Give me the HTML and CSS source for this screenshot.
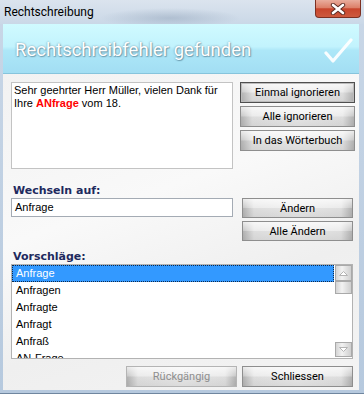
FILE: index.html
```html
<!DOCTYPE html>
<html lang="de">
<head>
    <meta charset="UTF-8">
    <title>Rechtschreibung</title>
    <link rel="stylesheet" href="styles.css">
</head>
<body>
    <div class="window">
        <div class="titlebar">
            <span class="title">Rechtschreibung</span>
            <div class="close">
                <svg width="18" height="12" viewBox="0 0 18 12">
                    <path d="M4 2 L14 10 M14 2 L4 10" stroke="#5a2a22" stroke-width="4.4" stroke-linecap="round"/>
                    <path d="M4 2 L14 10 M14 2 L4 10" stroke="#fff" stroke-width="2.6" stroke-linecap="round"/>
                </svg>
            </div>
        </div>

        <div class="client">
            <div class="header">
                <span class="headline">Rechtschreibfehler gefunden</span>
                <svg class="check" width="29" height="25" viewBox="0 0 29 25">
                    <path d="M2 15 L9 23 L27 2" fill="none" stroke="#fff" stroke-width="3.2" stroke-linejoin="round" stroke-linecap="round" opacity="0.92"/>
                </svg>
            </div>

            <div class="content">
                <div class="row top">
                    <div class="textbox">
                        Sehr geehrter Herr Müller, vielen Dank für<br>
                        Ihre <span class="error">ANfrage</span> vom 18.
                    </div>
                    <div class="buttons wide">
                        <button class="btn default">Einmal ignorieren</button>
                        <button class="btn">Alle ignorieren</button>
                        <button class="btn">In das Wörterbuch</button>
                    </div>
                </div>

                <div class="label first">Wechseln auf:</div>
                <div class="row change">
                    <div class="input">Anfrage</div>
                    <div class="buttons narrow">
                        <button class="btn small">Ändern</button>
                        <button class="btn small">Alle Ändern</button>
                    </div>
                </div>

                <div class="label second">Vorschläge:</div>
                <div class="listbox">
                    <div class="items">
                        <div class="item selected">Anfrage</div>
                        <div class="item">Anfragen</div>
                        <div class="item">Anfragte</div>
                        <div class="item">Anfragt</div>
                        <div class="item">Anfraß</div>
                        <div class="item">AN-Frage</div>
                    </div>
                    <div class="scrollbar">
                        <div class="sb-btn up">
                            <svg width="9" height="5" viewBox="0 0 9 5"><path d="M0.5 4.5 L4.5 0.5 L8.5 4.5 Z" fill="#fff" stroke="#b4b4b4"/></svg>
                        </div>
                        <div class="sb-thumb"></div>
                        <div class="sb-btn down">
                            <svg width="9" height="5" viewBox="0 0 9 5"><path d="M0.5 0.5 L4.5 4.5 L8.5 0.5 Z" fill="#fff" stroke="#b4b4b4"/></svg>
                        </div>
                    </div>
                </div>

                <div class="row bottom">
                    <button class="btn disabled">Rückgängig</button>
                    <button class="btn">Schliessen</button>
                </div>
            </div>
        </div>
    </div>
</body>
</html>
```

FILE: styles.css
```css
body {
    margin: 0;
    background-color: #ffffff;
    font-family: 'Liberation Sans', Arial, sans-serif;
}
.window {
    width: 364px;
    height: 394px;
    box-sizing: border-box;
    display: flex;
    flex-direction: column;
    background: linear-gradient(to bottom, #c9d7e7, #b6c9de);
    border-bottom: 1px solid #6f869f;
}
.titlebar {
    height: 24px;
    flex-shrink: 0;
    display: flex;
    justify-content: space-between;
    align-items: flex-start;
    background:
        radial-gradient(ellipse 70px 10px at 170px 18px, rgba(120,140,165,.35), rgba(120,140,165,0)),
        linear-gradient(to bottom, #dbe4ee, #cad8e7);
}
.title {
    font-family: Roboto, 'Liberation Sans', sans-serif;
    font-size: 12px;
    color: #000;
    padding: 4px 0 0 4px;
    line-height: 16px;
}
.close {
    width: 44px;
    height: 17px;
    margin-right: 3px;
    display: flex;
    align-items: center;
    justify-content: center;
    border: 1px solid #7c3022;
    border-top: none;
    border-radius: 0 0 4px 4px;
    background: linear-gradient(to bottom, #e9ad9d, #dc8069 45%, #c8452c 52%, #cd5a3e);
}
.client {
    flex: 1;
    margin: 0 5px 3px 3px;
    display: flex;
    flex-direction: column;
    background: linear-gradient(160deg, #f0f0f0, #f9f9f9 45%, #efefef 70%, #f4f4f4);
}
.header {
    height: 49px;
    flex-shrink: 0;
    border-bottom: 1px solid #86c4dc;
    display: flex;
    justify-content: space-between;
    align-items: center;
    padding: 0 6px 0 12px;
    background: linear-gradient(to bottom, #d0faff, #c2f3fd 46%, #ade7f8 54%, #a2def3);
}
.headline {
    font-family: Roboto, 'Liberation Sans', sans-serif;
    font-size: 18.5px;
    color: #ffffff;
    margin-top: 3px;
    text-shadow: 0 0 2px rgba(70,110,130,.7), 1px 1px 1px rgba(70,110,130,.5);
}
.check {
    margin-top: 3px;
}
.content {
    padding: 8px 4px 0 8px;
    font-size: 11px;
}
.row {
    display: flex;
    justify-content: space-between;
}
.textbox {
    width: 222px;
    height: 87px;
    box-sizing: border-box;
    border: 1px solid #c3c3c3;
    background-color: #fff;
    padding: 1px 2px;
    line-height: 13px;
    color: #000;
}
.error {
    color: #ff0000;
    font-weight: bold;
}
.buttons {
    display: flex;
    flex-direction: column;
    gap: 3px;
}
.buttons.wide {
    width: 115px;
}
.buttons.narrow {
    width: 111px;
    margin-right: 2px;
}
.btn {
    height: 21px;
    box-sizing: border-box;
    padding: 0;
    border: 1px solid #8e8e8e;
    font-family: Roboto, 'Liberation Sans', sans-serif;
    font-size: 11px;
    color: #000;
    background:
        linear-gradient(to bottom, rgba(255,255,255,.7), rgba(255,255,255,.2) 48%, rgba(0,0,0,.04) 52%, rgba(0,0,0,.08)),
        linear-gradient(to right, #b9b9b9, #e6e6e6 10%, #eeeeee 50%, #e6e6e6 90%, #b9b9b9);
}
.btn.default {
    border-color: #4f4f4f;
    box-shadow: inset 0 0 0 1px #bcbcbc;
}
.btn.small {
    height: 20px;
}
.btn.disabled {
    color: #8e8e8e;
    border-color: #b4b4b4;
}
.label {
    font-family: 'DejaVu Sans', Verdana, sans-serif;
    font-weight: bold;
    font-size: 11px;
    line-height: 14px;
    color: #1e2a5e;
    margin-left: 2px;
}
.label.first {
    margin-top: 15px;
}
.label.second {
    margin-top: 9px;
}
.change {
    height: 43px;
}
.input {
    width: 222px;
    height: 19px;
    box-sizing: border-box;
    border: 1px solid #a4abb4;
    background-color: #fff;
    padding-left: 3px;
    line-height: 17px;
    color: #000;
}
.listbox {
    width: 342px;
    height: 95px;
    box-sizing: border-box;
    border: 1px solid #b2b2b2;
    background-color: #fff;
    display: flex;
    overflow: hidden;
}
.items {
    flex: 1;
    overflow: hidden;
}
.item {
    height: 17px;
    line-height: 15px;
    box-sizing: border-box;
    border: 1px solid transparent;
    padding-left: 3px;
    color: #000;
}
.item.selected {
    background-color: #3399ff;
    color: #fff;
    border: 1px dotted #102a4a;
    margin-right: 1px;
}
.scrollbar {
    width: 17px;
    display: flex;
    flex-direction: column;
}
.sb-btn, .sb-thumb {
    box-sizing: border-box;
    border: 1px solid #a9a9a9;
    background: linear-gradient(to right, #d4d4d4, #f2f2f2 40%, #e6e6e6 60%, #cfcfcf);
    display: flex;
    align-items: center;
    justify-content: center;
}
.sb-btn.up {
    height: 16px;
}
.sb-thumb {
    height: 13px;
}
.sb-btn.down {
    height: 15px;
    margin-top: auto;
    margin-bottom: 1px;
}
.bottom {
    justify-content: flex-end;
    gap: 5px;
    margin-top: 7px;
    margin-right: 2px;
}
.bottom .btn {
    width: 111px;
}
```
